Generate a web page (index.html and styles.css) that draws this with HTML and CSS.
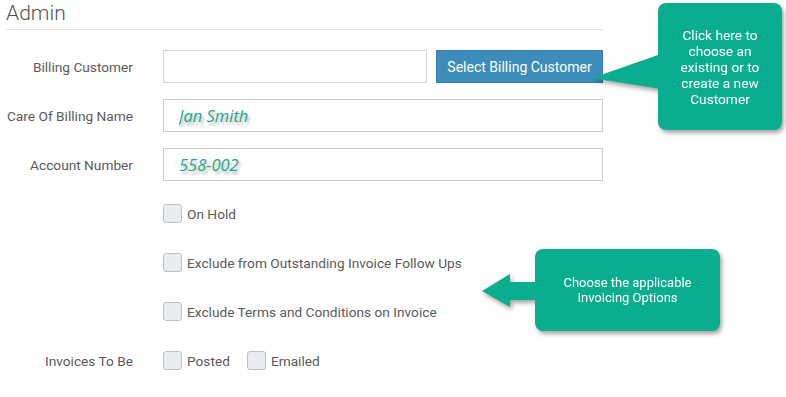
FILE: index.html
```html
<!DOCTYPE html>
<html lang="en">
<head>
    <meta charset="UTF-8">
    <title>Admin</title>
    <link rel="stylesheet" href="styles.css">
</head>
<body>
<div class="panel">
    <h2 class="panel-title">Admin</h2>

    <div class="form-grid">
        <label class="field-label" for="billing-customer">Billing Customer</label>
        <div class="field-group">
            <input type="text" id="billing-customer" class="field-input short">
            <button class="select-button">Select Billing Customer</button>
        </div>

        <label class="field-label" for="care-of">Care Of Billing Name</label>
        <input type="text" id="care-of" class="field-input filled" value="Jan Smith">

        <label class="field-label" for="account-number">Account Number</label>
        <input type="text" id="account-number" class="field-input filled" value="558-002">

        <span class="field-label"></span>
        <div class="check-line">
            <label class="check"><input type="checkbox"> On Hold</label>
        </div>

        <span class="field-label"></span>
        <div class="check-line">
            <label class="check"><input type="checkbox"> Exclude from Outstanding Invoice Follow Ups</label>
        </div>

        <span class="field-label"></span>
        <div class="check-line">
            <label class="check"><input type="checkbox"> Exclude Terms and Conditions on Invoice</label>
        </div>

        <span class="field-label">Invoices To Be</span>
        <div class="check-line">
            <label class="check"><input type="checkbox"> Posted</label>
            <label class="check"><input type="checkbox"> Emailed</label>
        </div>
    </div>
</div>

<!-- Help callouts -->
<div class="callout callout-customer">
    <svg class="callout-tail" width="70" height="127" viewBox="0 0 70 127">
        <polygon points="0,75 69,51 69,86" fill="#0aae8f"/>
    </svg>
    <div class="callout-box">Click here to<br>choose an<br>existing or to<br>create a new<br>Customer</div>
</div>

<div class="callout callout-invoicing">
    <svg class="callout-tail" width="56" height="82" viewBox="0 0 56 82">
        <polygon points="0,42 28,25 28,33 56,33 56,51 28,51 28,58" fill="#0aae8f"/>
    </svg>
    <div class="callout-box">Choose the applicable<br>Invoicing Options</div>
</div>
</body>
</html>
```

FILE: styles.css
```css
* {
    margin: 0;
    padding: 0;
    box-sizing: border-box;
}

body {
    font-family: Roboto, "Liberation Sans", Arial, sans-serif;
    background-color: #fff;
    color: #555;
}

.panel {
    width: 603px;
    padding-left: 6px;
}

.panel-title {
    font-size: 21px;
    font-weight: 300;
    line-height: 24px;
    padding-top: 1px;
    padding-bottom: 4px;
    border-bottom: 1px solid #e4e4e4;
    color: #555;
}

.form-grid {
    display: grid;
    grid-template-columns: 127px 1fr;
    grid-auto-rows: 33px;
    column-gap: 30px;
    row-gap: 16px;
    margin-top: 20px;
}

.field-label {
    font-size: 13.7px;
    color: #5a5a5a;
    text-align: right;
    align-self: center;
    white-space: nowrap;
}

.field-group {
    display: flex;
    gap: 9px;
}

.field-input {
    width: 100%;
    height: 33px;
    border: 1px solid #ccc;
    background: #fff;
    padding: 0 15px;
    outline: none;
}

.field-input.short {
    width: 264px;
    border-color: #cfd4da;
}

.field-input.filled {
    font-family: "Open Sans", "Noto Sans", sans-serif;
    font-style: italic;
    font-size: 16.5px;
    color: #1ea98b;
    text-shadow: 2px 3px 3px rgba(0, 0, 0, 0.3);
}

.select-button {
    width: 167px;
    height: 33px;
    background-color: #3c8dbc;
    border: 1px solid #367fa9;
    color: #fff;
    font-family: inherit;
    font-size: 14px;
    cursor: pointer;
}

.select-button:hover {
    background-color: #367fa9;
}

.check-line {
    display: flex;
    align-items: center;
    gap: 17px;
}

.check {
    display: flex;
    align-items: center;
    gap: 5px;
    font-size: 13.7px;
    color: #5a5a5a;
}

.check input {
    appearance: none;
    -webkit-appearance: none;
    width: 19px;
    height: 19px;
    border: 1px solid #b9c1c9;
    border-radius: 3px;
    background-color: #e9edf1;
    margin: 0;
}

/* Help callouts */
.callout {
    position: absolute;
    filter: drop-shadow(2px 3px 2px rgba(0, 0, 0, 0.35));
}

.callout-tail {
    position: absolute;
    left: 0;
    top: 0;
}

.callout-box {
    position: absolute;
    top: 0;
    right: 0;
    height: 100%;
    background-color: #0aae8f;
    border-radius: 8px;
    color: #fff;
    font-size: 13.7px;
    text-align: center;
    display: flex;
    align-items: center;
    justify-content: center;
}

.callout-customer {
    left: 592px;
    top: 3px;
    width: 190px;
    height: 127px;
}

.callout-customer .callout-box {
    width: 124px;
    line-height: 16px;
}

.callout-invoicing {
    left: 482px;
    top: 249px;
    width: 238px;
    height: 82px;
}

.callout-invoicing .callout-box {
    width: 185px;
    font-size: 13px;
    line-height: 15px;
}
```
